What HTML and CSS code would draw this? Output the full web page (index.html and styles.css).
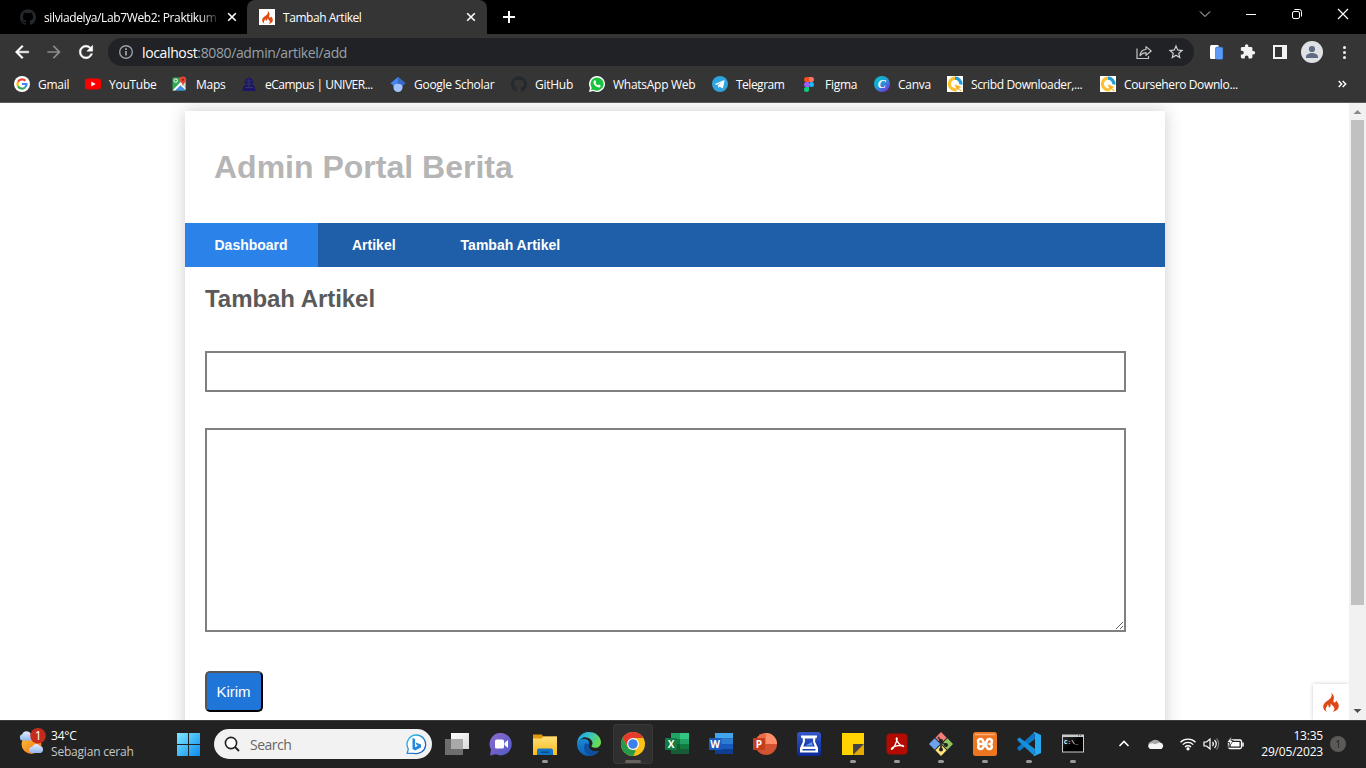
FILE: index.html
```html
<!DOCTYPE html>
<html lang="id">
<head>
<meta charset="utf-8">
<title>Tambah Artikel</title>
<link rel="stylesheet" href="styles.css">
</head>
<body>
<svg class="defs" width="0" height="0">
  <defs>
    <linearGradient id="gWin" x1="0" y1="0" x2="1" y2="1"><stop offset="0" stop-color="#7fe8ff"/><stop offset="1" stop-color="#0a8af0"/></linearGradient>
    <linearGradient id="gCanva" x1="0" y1="0" x2=".8" y2="1"><stop offset="0" stop-color="#00c9cc"/><stop offset=".5" stop-color="#1f9fd2"/><stop offset="1" stop-color="#7d2ae8"/></linearGradient>
    <linearGradient id="gChat" x1="0" y1="0" x2="1" y2="1"><stop offset="0" stop-color="#8d6bd0"/><stop offset="1" stop-color="#5158c4"/></linearGradient>
    <linearGradient id="gFolder" x1="0" y1="0" x2="0" y2="1"><stop offset="0" stop-color="#ffe078"/><stop offset="1" stop-color="#fdb91a"/></linearGradient>
    <linearGradient id="gEdgeTop" x1="0" y1="0" x2="1" y2=".4"><stop offset="0" stop-color="#1c9fe0"/><stop offset=".5" stop-color="#35c1c8"/><stop offset="1" stop-color="#66dc55"/></linearGradient>
    <linearGradient id="gEdge" x1="0" y1="0" x2="0" y2="1"><stop offset="0" stop-color="#2099dc"/><stop offset="1" stop-color="#0c62b8"/></linearGradient>
    <linearGradient id="gBing" x1="0" y1="0" x2="1" y2="1"><stop offset="0" stop-color="#2cc6e8"/><stop offset="1" stop-color="#1c4fc0"/></linearGradient>
    <linearGradient id="gSun" x1="0" y1="0" x2="1" y2="1"><stop offset="0" stop-color="#ffc63a"/><stop offset="1" stop-color="#ee6b15"/></linearGradient>
    <linearGradient id="gCloud" x1="0" y1="0" x2="0" y2="1"><stop offset="0" stop-color="#e5efff"/><stop offset="1" stop-color="#91b5ee"/></linearGradient>
    <linearGradient id="gScan" x1="0" y1="0" x2="0" y2="1"><stop offset="0" stop-color="#3557c8"/><stop offset="1" stop-color="#0b2a97"/></linearGradient>
    <linearGradient id="gTask" x1="0" y1="0" x2="1" y2="1"><stop offset="0" stop-color="#fff"/><stop offset="1" stop-color="#d8d8d8"/></linearGradient>
    <linearGradient id="gCmd" x1="0" y1="0" x2="1" y2="1"><stop offset="0" stop-color="#303030"/><stop offset=".5" stop-color="#000"/></linearGradient>
    <symbol id="github" viewBox="0 0 24 24"><path d="M12 .297c-6.63 0-12 5.373-12 12 0 5.303 3.438 9.8 8.205 11.385.6.113.82-.258.82-.577 0-.285-.01-1.04-.015-2.04-3.338.724-4.042-1.61-4.042-1.61C4.422 18.07 3.633 17.7 3.633 17.7c-1.087-.744.084-.729.084-.729 1.205.084 1.838 1.236 1.838 1.236 1.07 1.835 2.809 1.305 3.495.998.108-.776.417-1.305.76-1.605-2.665-.3-5.466-1.332-5.466-5.93 0-1.31.465-2.38 1.235-3.22-.135-.303-.54-1.523.105-3.176 0 0 1.005-.322 3.3 1.23.96-.267 1.98-.399 3-.405 1.02.006 2.04.138 3 .405 2.28-1.552 3.285-1.23 3.285-1.23.645 1.653.24 2.873.12 3.176.765.84 1.23 1.91 1.23 3.22 0 4.61-2.805 5.625-5.475 5.92.42.36.81 1.096.81 2.22 0 1.606-.015 2.896-.015 3.286 0 .315.21.69.825.57C20.565 22.092 24 17.592 24 12.297c0-6.627-5.373-12-12-12"/></symbol>
    <symbol id="flame" viewBox="0 0 16 19"><path fill="#dd4814" d="M8.200 0c.9 1.900.5 3.500-.6 4.900C5.500 7.600.2 9.400.2 13.700c0 2.500 1.600 4.300 3.900 5.100-1.300-1.100-1.700-2.300-1.200-3.700.5-1.200 1.600-1.900 1.700-3.500 1 .7 1.300 1.700 1 2.700.9.200 1.700-.3 2-1.200.2-1-.2-1.900.1-2.800.4 2 3.700 2.700 3.700 5.300 0 1.300-.6 2.400-1.700 3.200 3.400-.8 6.100-2.700 6.100-5.800 0-2.400-1.600-3.900-2.800-5.400.1 1-.3 1.800-1.300 1.900-1.200 0-1.500-1-1.200-2C11.200 4.900 11.200 1.600 8.200 0z"/></symbol>
    <symbol id="close" viewBox="0 0 10 10"><path d="M1.200 1.200l7.600 7.600M8.800 1.200L1.200 8.800" fill="none" stroke="#fff" stroke-width="1.600"/></symbol>
    <symbol id="ring" viewBox="0 0 16 16"><path fill="#fff" d="M0 0h16v16H0z"/><path d="M8 2.200A5.800 5.800 0 1 0 10 13.500" fill="none" stroke="#fbc02d" stroke-width="3.200"/><path d="M8 2.200A5.800 5.800 0 0 1 13.900 8.500" fill="none" stroke="#1f9bd8" stroke-width="3.200"/><path fill="#fbb01d" stroke="#fff" stroke-width=".5" d="M7.500 8l7.800 3-3 1.200 2.800 2.600-1.300 1-2.500-2.600-1.400 2.500z"/></symbol>
  </defs>
</svg>

<header class="browser">
  <div class="tabstrip">
    <div class="tab tab-idle">
      <svg class="i16" fill="#24292e"><use href="#github"/></svg>
      <span class="tab-title tab-fade">silviadelya/Lab7Web2: Praktikum</span>
      <svg class="i10"><use href="#close"/></svg>
    </div>
    <div class="tab tab-active">
      <span class="favicon"><svg width="11" height="13"><use href="#flame"/></svg></span>
      <span class="tab-title">Tambah Artikel</span>
      <svg class="i10"><use href="#close"/></svg>
    </div>
    <svg class="new-tab" width="12" height="12" viewBox="0 0 12 12"><path d="M6 0v12M0 6h12" stroke="#fff" stroke-width="2"/></svg>
    <div class="window-controls">
      <svg viewBox="0 0 46 28"><path d="M18 11.500l5 5 5-5" fill="none" stroke="#ddd"/></svg>
      <svg viewBox="0 0 46 28"><path d="M18 14.500h10" stroke="#fff"/></svg>
      <svg viewBox="0 0 46 28"><rect x="18.500" y="11.500" width="7" height="7" rx="1.500" fill="none" stroke="#fff"/><path d="M20.500 9.500h5a2 2 0 0 1 2 2v5" fill="none" stroke="#fff"/></svg>
      <svg viewBox="0 0 46 28"><path d="M18 9l10 10M28 9L18 19" stroke="#fff" stroke-width="1.200"/></svg>
    </div>
  </div>

  <div class="toolbar">
    <div class="nav-buttons">
      <svg viewBox="0 0 24 24" fill="#fff"><path stroke="#fff" stroke-width=".6" d="M20 11H7.830l5.590-5.590L12 4l-8 8 8 8 1.410-1.410L7.830 13H20v-2z"/></svg>
      <svg viewBox="0 0 24 24" fill="#8b8b8b"><path d="M4 11h12.170l-5.590-5.590L12 4l8 8-8 8-1.410-1.410L16.170 13H4v-2z"/></svg>
      <svg viewBox="0 0 24 24" fill="#fff"><path stroke="#fff" stroke-width=".6" d="M17.650 6.350C16.200 4.900 14.210 4 12 4c-4.420 0-7.990 3.580-7.990 8s3.570 8 7.990 8c3.730 0 6.840-2.550 7.730-6h-2.080c-.82 2.330-3.040 4-5.650 4-3.310 0-6-2.690-6-6s2.690-6 6-6c1.660 0 3.140.69 4.220 1.780L13 11h7V4l-2.350 2.350z"/></svg>
    </div>
    <div class="omnibox">
      <svg class="i16" viewBox="0 0 16 16"><circle cx="8" cy="8" r="6.300" fill="none" stroke="#9aa0a6" stroke-width="1.400"/><path d="M8 7v4.500M8 4.300V6" stroke="#b4b6b9" stroke-width="1.500"/></svg>
      <span class="url"><b>localhost</b>:8080/admin/artikel/add</span>
      <svg class="i16" viewBox="0 0 16 16" fill="none" stroke="#c4c7c5" stroke-width="1.200"><path d="M1 4.500v10h11.500v-2.500"/><path d="M4 11.500c.3-3.500 2.500-5.800 6-6V2.600L15.200 7l-5.200 4.300V8.700c-2.500 0-4.300.8-6 2.800z" stroke-linejoin="round"/></svg>
      <svg class="i18" viewBox="0 0 24 24" fill="#cfd1d3"><path d="M22 9.240l-7.190-.62L12 2 9.190 8.630 2 9.240l5.460 4.730L5.820 21 12 17.270 18.180 21l-1.630-7.030L22 9.240zM12 15.400l-3.760 2.270 1-4.280-3.320-2.880 4.380-.38L12 6.100l1.710 4.040 4.380.38-3.320 2.880 1 4.280L12 15.400z"/></svg>
    </div>
    <div class="actions">
      <svg viewBox="0 0 32 28"><rect x="6" y="7" width="9" height="14" rx="1.500" fill="#fff"/><rect x="11.500" y="9" width="7.500" height="12.500" rx="1.500" fill="#5a9bf8" stroke="#2a4d80" stroke-width=".5"/></svg>
      <svg viewBox="0 0 32 28"><path fill="#f1f3f4" transform="translate(3.500 5.500) scale(.68)" d="M20.500 11H19V7c0-1.100-.9-2-2-2h-4V3.500C13 2.120 11.880 1 10.500 1S8 2.120 8 3.500V5H4c-1.100 0-1.990.9-1.990 2v3.800H3.500c1.490 0 2.700 1.210 2.700 2.700s-1.210 2.700-2.700 2.700H2V20c0 1.100.9 2 2 2h3.800v-1.500c0-1.490 1.210-2.700 2.700-2.700 1.490 0 2.700 1.210 2.700 2.700V22H17c1.100 0 2-.9 2-2v-4h1.500c1.380 0 2.500-1.120 2.500-2.500S21.880 11 20.500 11z"/></svg>
      <svg viewBox="0 0 32 28"><path fill="#f1f3f4" fill-rule="evenodd" d="M5 7h14v14H5zM7 9v10h7V9z"/></svg>
      <svg viewBox="0 0 32 28"><circle cx="12" cy="14" r="11" fill="#dfe1e5"/><circle cx="12" cy="11" r="3.100" fill="#5f6b80"/><path fill="#5f6b80" d="M6 20v-1.500c0-2.300 3.500-3.500 6-3.500s6 1.200 6 3.500V20z"/></svg>
      <svg viewBox="0 0 32 28" fill="#f1f3f4"><circle cx="12.500" cy="9.500" r="1.500"/><circle cx="12.500" cy="14.500" r="1.500"/><circle cx="12.500" cy="19.500" r="1.500"/></svg>
    </div>
  </div>

  <nav class="bookmarks">
    <a class="bm"><svg class="i16" viewBox="0 0 16 16"><circle cx="8" cy="8" r="8" fill="#fff"/><g fill="none" stroke-width="2.200"><path stroke="#ea4335" d="M4 5.800A4.600 4.600 0 0 1 11.400 4.800"/><path stroke="#fbbc05" d="M4 5.800A4.600 4.600 0 0 0 4 10.200"/><path stroke="#34a853" d="M4 10.200A4.600 4.600 0 0 0 11 11.500"/><path stroke="#4285f4" d="M11 11.500A4.600 4.600 0 0 0 12.500 8H8"/></g></svg><span>Gmail</span></a>
    <a class="bm"><svg class="i16" viewBox="0 0 16 16"><rect y="2.500" width="16" height="11" rx="3" fill="#f00"/><path fill="#fff" d="M6.300 5.600v4.800L10.600 8z"/></svg><span>YouTube</span></a>
    <a class="bm"><svg class="i16" viewBox="0 0 16 16"><rect x=".5" y="1.500" width="13" height="13" rx="1" fill="#34a853"/><path fill="#4a8af4" d="M7.500 9l6 5.500H2.500z"/><path fill="#fff" d="M12.500 2L.5 14.500h2.600L13.500 4.200zM7.500 8.500l6 5.500v-2L9 7.500z"/><path fill="#dadce0" d="M10 8.500L13.500 5v7z"/><circle cx="3.700" cy="4.600" r="1.700" fill="none" stroke="#fff"/><path fill="#ea4335" d="M11 .5A3.200 3.200 0 0 0 7.800 3.700C7.800 6 10.500 7 11 10 11.500 7 14.200 6 14.200 3.700A3.200 3.200 0 0 0 11 .5z"/><circle cx="11" cy="3.700" r="1.200" fill="#a52714"/></svg><span>Maps</span></a>
    <a class="bm tight"><svg class="i16" viewBox="0 0 16 16"><path fill="#1b1768" d="M8 1.500l3 1.500 1.500 3-.8 3L14 11v2.500h.5V15h-13v-1.500H2V11l2.300-2-.8-3L5 3z"/><path d="M5.500 5h5M5 8h6M4 11.500h8M8 3v9" stroke="#3a3866" stroke-width=".9"/></svg><span>eCampus | UNIVER...</span></a>
    <a class="bm"><svg class="i16" viewBox="0 0 16 16"><path fill="#a0c3ff" d="M3.500 7.500h9v4A4.500 4.500 0 0 1 8 16a4.500 4.500 0 0 1-4.500-4.500z"/><path fill="#4285f4" d="M8 1L.5 7.200 3.700 9.800a4.800 4.800 0 0 1 8.600 0L15.500 7.200z"/><path fill="#356ac3" d="M8 1v6.200c2 0 3.700 1.100 4.300 2.600l3.200-2.600z"/></svg><span>Google Scholar</span></a>
    <a class="bm"><svg class="i16" fill="#24292e"><use href="#github"/></svg><span>GitHub</span></a>
    <a class="bm"><svg class="i16" viewBox="0 0 16 16"><path fill="#fff" d="M8 0a8 8 0 1 1-3.700 15.100L0 16l1-4.100A8 8 0 0 1 8 0z"/><path fill="#18c13e" d="M8 1.400a6.600 6.600 0 1 1-3.300 12.300L2 14.300l.7-2.600A6.600 6.600 0 0 1 8 1.400z"/><path fill="#fff" d="M5.600 4.200c.3-.1.700-.1.900.3l.6 1.400c.1.300-.4.800-.6 1.100.6 1.200 1.500 2 2.600 2.500.3-.3.600-.9.900-.9l1.500.8c.4.200-.1 1.500-.6 1.800-1.300.8-3.500-.2-4.900-1.600C4.500 8 3.800 5.200 5.600 4.200z"/></svg><span>WhatsApp Web</span></a>
    <a class="bm tight"><svg class="i16" viewBox="0 0 16 16"><circle cx="8" cy="8" r="8" fill="#2ca5e0"/><path fill="#fff" d="M2.800 7.900l9-3.600c.5-.2.800.1.700.6l-1.500 7c-.1.500-.4.600-.9.300L7.500 10.400l-.9 1.700-.7-2.500 4-3.600-4.900 3.100z"/></svg><span>Telegram</span></a>
    <a class="bm"><svg class="i16" viewBox="0 0 16 16"><path fill="#f24e1e" d="M5.500 1H8v5H5.500a2.500 2.500 0 0 1 0-5z"/><path fill="#ff7262" d="M8 1h2.500a2.500 2.500 0 0 1 0 5H8z"/><path fill="#a259ff" d="M5.500 6H8v5H5.500a2.500 2.500 0 0 1 0-5z"/><circle cx="10.500" cy="8.500" r="2.500" fill="#1abcfe"/><path fill="#0acf83" d="M5.500 11H8v2.500A2.500 2.500 0 1 1 5.500 11z"/></svg><span>Figma</span></a>
    <a class="bm"><svg class="i16" viewBox="0 0 16 16"><circle cx="8" cy="8" r="8" fill="url(#gCanva)"/><text x="7.800" y="12.300" text-anchor="middle" class="canva-letter">C</text></svg><span>Canva</span></a>
    <a class="bm snug"><svg class="i16"><use href="#ring"/></svg><span>Scribd Downloader,...</span></a>
    <a class="bm snug"><svg class="i16"><use href="#ring"/></svg><span>Coursehero Downlo...</span></a>
    <svg class="overflow" width="9" height="8" viewBox="0 0 9 8"><path d="M.7 1l3 3-3 3M4.700 1l3 3-3 3" fill="none" stroke="#fff" stroke-width="1.400"/></svg>
  </nav>
</header>

<div class="viewport">
  <main class="page">
    <div class="container">
      <header class="site-header"><h1>Admin Portal Berita</h1></header>
      <nav class="site-nav">
        <a class="active">Dashboard</a>
        <a>Artikel</a>
        <a>Tambah Artikel</a>
      </nav>
      <section class="content">
        <h2>Tambah Artikel</h2>
        <form>
          <input type="text" class="field">
          <textarea class="field area"></textarea>
          <button type="button" class="submit">Kirim</button>
        </form>
      </section>
    </div>
    <div class="debug-icon"><svg width="16" height="19"><use href="#flame"/></svg></div>
  </main>
  <div class="scrollbar">
    <svg width="17" height="17"><path d="M4.500 11h8l-4-4z" fill="#8a8a8a"/></svg>
    <div class="thumb"></div>
    <svg width="17" height="17"><path d="M4.500 6h8l-4 4z" fill="#505050"/></svg>
  </div>
</div>

<footer class="taskbar">
  <div class="weather">
    <svg width="28" height="30" viewBox="0 0 28 30"><circle cx="12.500" cy="16" r="10" fill="url(#gSun)"/><path fill="url(#gCloud)" d="M3.200 12.500a3.200 3.200 0 0 1 0-6.200A4.800 4.800 0 0 1 12 6 3.400 3.400 0 0 1 12.500 12.500z"/><path fill="url(#gCloud)" d="M13 25a3 3 0 0 1 0-6 4.500 4.500 0 0 1 8-1 3.600 3.600 0 0 1 .5 7z"/><circle cx="19" cy="7.800" r="7.800" fill="#c42b1c"/><text x="19" y="12" text-anchor="middle" class="badge-number">1</text></svg>
    <div class="weather-text"><span>34°C</span><span class="muted">Sebagian cerah</span></div>
  </div>
  <svg class="start" width="23" height="23" viewBox="0 0 23 23" fill="url(#gWin)"><path d="M0 0h11v11H0zM12 0h11v11H12zM0 12h11v11H0zM12 12h11v11H12z"/></svg>
  <div class="search">
    <svg class="i16" viewBox="0 0 16 16"><circle cx="7" cy="7" r="5.600" fill="#fff" stroke="#222" stroke-width="1.600"/><path d="M11 11l4 4" stroke="#222" stroke-width="1.800"/></svg>
    <span>Search</span>
    <svg width="21" height="21" viewBox="0 0 21 21"><path fill="#fff" stroke="url(#gBing)" stroke-width="1.300" d="M10.500 1A9.300 9.300 0 1 1 8 19.300H1.200L2.300 15A9.300 9.300 0 0 1 10.500 1z"/><path fill="#2387dd" d="M6.500 4l2.600 1v8.200l2.800-1.500-1.300-.8-.9-2.500 5.300 2v3L9 16.500l-2.500-1.600z"/></svg>
  </div>
  <div class="apps">
    <div class="app"><svg viewBox="0 0 24 24"><rect x="6" y="1" width="18" height="16" fill="url(#gTask)"/><path fill="#7b7b7b" fill-opacity=".85" d="M0 7h18v16H0z"/><path fill="#a9a9a9" d="M6 7h12v10H6z"/></svg></div>
    <div class="app"><svg viewBox="0 0 24 24"><path fill="url(#gChat)" d="M12 1a11 11.200 0 1 1-5 21.300L1 23.400l1-6A11 11 0 0 1 12 1z"/><rect x="6" y="7.500" width="9" height="9" rx="1.500" fill="#fff"/><path fill="#fff" d="M15.500 11L19 8v8l-3.500-3z"/></svg></div>
    <div class="app running"><svg viewBox="0 0 24 24"><path fill="#e29a0c" d="M0 2.500h8.500l2 2H24V8H0z"/><path fill="url(#gFolder)" d="M0 6.500h8.500l2-2H24V23H0z"/><path fill="#1474c4" d="M4 23v-4.500a2 2 0 0 1 2-2h12a2 2 0 0 1 2 2V23z"/><path fill="#0a4a8e" d="M8 19.500h8V21H8z"/></svg></div>
    <div class="app"><svg viewBox="0 0 24 24"><path fill="url(#gEdge)" d="M12 0A12 12 0 0 0 0 12a12 12 0 0 0 12 12c4.500 0 8-2.100 10-5.200-3 1.400-8 1-9.700-2.300-1.300-2.500 0-4.200-.2-6C11.700 7 7 5.800 3 8.500z"/><path fill="#1050a0" d="M8 11.500c-2.600 5.500.5 11.600 5.500 12.400 3.500-.3 6.700-2.100 8.500-5.100-5 2.200-11.500-.8-9.700-7.100z"/><path fill="url(#gEdgeTop)" d="M.2 10.500C1.500 4 6.600 0 12 0c7 0 12 5 12 10.300 0 3.500-2.500 5.500-5.500 5.500-2.400 0-4.200-.8-4-1.700.1-.8 1-1.100 1-3C15.500 8 12 5.200 8 5.200 4 5.200 1.500 7.500.2 10.500z"/></svg></div>
    <div class="app current"><svg viewBox="0 0 24 24"><circle cx="12" cy="12" r="12" fill="#fbc116"/><path fill="#e33b2e" d="M1.600 6A12 12 0 0 1 22.400 6H12L6.800 15z"/><path fill="#269a46" d="M1.600 6l5.200 9 5.200 3 3 .5L12 24A12 12 0 0 1 1.600 6z"/><circle cx="12" cy="12" r="6" fill="#fff"/><circle cx="12" cy="12" r="4.800" fill="#3b80ec"/></svg></div>
    <div class="app"><svg viewBox="0 0 24 24"><path fill="#21a366" d="M6 1h18v6H6z"/><path fill="#33c481" d="M15 1h9v6h-9z"/><path fill="#107c41" d="M6 7h18v5H6z"/><path fill="#185c37" d="M6 12h18v10H6z"/><path fill="#21a366" d="M15 7h9v5h-9z"/><path fill="#107c41" d="M15 12h9v5h-9z"/><rect y="6" width="12" height="12" rx="1" fill="#107c41"/><text x="6" y="15.700" text-anchor="middle" class="office">X</text></svg></div>
    <div class="app"><svg viewBox="0 0 24 24"><path fill="#41a5ee" d="M6 1h18v5.500H6z"/><path fill="#2b7cd3" d="M6 6.500h18V12H6z"/><path fill="#185abd" d="M6 12h18v5H6z"/><path fill="#103f91" d="M6 17h18v5H6z"/><rect y="6" width="12.500" height="12" rx="1" fill="#185abd"/><text x="6" y="15.500" text-anchor="middle" class="office">W</text></svg></div>
    <div class="app"><svg viewBox="0 0 24 24"><circle cx="13" cy="12" r="11" fill="#d35230"/><path fill="#ed6c47" d="M13 1A11 11 0 0 0 2 12h11z"/><path fill="#ff8f6b" d="M13 1a11 11 0 0 1 11 11H13z"/><rect y="6" width="12" height="12" rx="1" fill="#c43e1c"/><text x="6" y="15.700" text-anchor="middle" class="office">P</text></svg></div>
    <div class="app"><svg viewBox="0 0 24 24"><rect width="24" height="24" rx="3" fill="url(#gScan)"/><path fill="#fff" fill-rule="evenodd" d="M4 3.500h16v2.300h-1.500L18 9.500 21 16v4.500H3V16l3-6.500-.5-3.700H4zM7.800 6.500L8 9.500 6.300 14.500h11.400L16 9.500l.2-3z"/><path fill="#1a3da8" d="M5.500 17h13v1.500h-13z"/><path fill="#5fa0ee" d="M8.500 13.500l6.500-3.500.8 3.500z"/></svg></div>
    <div class="app running"><svg viewBox="0 0 24 24"><path fill="#ffd400" d="M1 1h22v22H1z"/><path fill="#e5a900" d="M12 23L23 12v11z"/><path fill="#444" d="M12 12h11L12 23z"/></svg></div>
    <div class="app running"><svg viewBox="0 0 24 24"><rect x="1.500" y="1.500" width="21" height="21" rx="4" fill="#b30b00"/><path d="M11.800 6c-1.600 0 .6 5.600 5.500 8.200 2.200 1.100 1.500-1-.8-.9-3.500 0-8.200 1.300-9.800 3-1 1.300.6 1.500 2-.8 1.700-2.800 4.400-9.500 3.100-9.500z" fill="none" stroke="#fff" stroke-width="1.300"/></svg></div>
    <div class="app running"><svg viewBox="0 0 24 24"><g transform="translate(12 12) rotate(45)"><path fill="#f27d79" d="M-8.500-8.500h8v8h-8z"/><path fill="#8dc65e" d="M.5-8.500h8v8h-8z"/><path fill="#6ba3ee" d="M-8.500.5h8v8h-8z"/><path fill="#ffe27a" d="M.5.500h8v8h-8z"/></g><path d="M9 5l3 4v8M12 10l5 3" fill="none" stroke="#333" stroke-width="1.700"/><g fill="#222"><circle cx="12" cy="9" r="2"/><circle cx="12" cy="17.500" r="2"/><circle cx="17" cy="13" r="2"/></g></svg></div>
    <div class="app running"><svg viewBox="0 0 24 24"><rect width="24" height="24" rx="2.500" fill="#ed7620"/><path d="M2 2.500h20" stroke="#ffad76" stroke-width="1.500"/><path d="M9.500 12h5M9.500 12H7.500a2.500 2.500 0 1 1 2.500-3l4 6.500a2.500 2.500 0 1 0 2.500-3.500 2.500 2.500 0 1 0-2.500-3l-4 6.500a2.500 2.500 0 1 1-2.500-3.500" fill="none" stroke="#fff" stroke-width="2.500" stroke-linejoin="round"/></svg></div>
    <div class="app running"><svg viewBox="0 0 24 24"><path fill="#0b77c5" d="M17.500 0L.5 15.500v1.700L2.500 19 18 7z"/><path fill="#168fdc" d="M17.500 24L.5 8.500V6.800L2.500 5.500 18 17z"/><path fill="#27a9f2" d="M17.500 0L24 3v18l-6.500 3-1-.5L18 21V3L16.500.5z"/></svg></div>
    <div class="app running"><svg viewBox="0 0 24 24"><path fill="#c9cdd2" d="M1 2.500h22v18H1z"/><path fill="url(#gCmd)" d="M2 5h20v14.500H2z"/><path d="M17 3.700h4" stroke="#555" stroke-dasharray="1 1"/><text x="3" y="11.500" class="prompt">C:\_</text></svg></div>
  </div>
  <div class="tray">
    <svg class="t-up" viewBox="0 0 32 24"><path d="M11.500 14l4.500-4.500L20.500 14" fill="none" stroke="#fff" stroke-width="1.600"/></svg>
    <svg class="t-cloud" viewBox="0 0 32 24"><path fill="#a7a7a7" d="M10 16a3.500 3.500 0 0 1 1-6.500 6 6 0 0 1 9 .5l2 6z"/><path fill="#f5f5f5" d="M10.500 17a2.700 2.700 0 0 1-.8-5 4 4 0 0 1 5 .3l5.300-1.800a3.500 3.500 0 0 1 1.500 6.500z"/></svg>
    <svg class="t-small" viewBox="0 0 24 24" fill="none" stroke="#fff" stroke-width="1.300"><path d="M4.500 10.200a10.600 10.600 0 0 1 15 0M6.800 12.600a7.400 7.400 0 0 1 10.400 0M9 15a4.200 4.200 0 0 1 6 0"/><circle cx="12" cy="16.800" r="1" fill="#fff"/></svg>
    <svg class="t-small" viewBox="0 0 24 24" fill="none" stroke="#fff" stroke-width="1.200"><path d="M4 10v4h2.500l3.500 3V7l-3.500 3zM12.500 10a3 3 0 0 1 0 4M14.500 8a5.500 5.500 0 0 1 0 8"/><path stroke="#777" d="M16.500 6.500a8 8 0 0 1 0 11"/></svg>
    <svg class="t-battery" viewBox="0 0 24 24"><rect x="4.500" y="8" width="13" height="8.500" rx="1.500" fill="none" stroke="#fff" stroke-width="1.300"/><rect x="6.500" y="10" width="9" height="4.500" fill="#fff"/><path d="M19 10.500v4" stroke="#fff" stroke-width="1.500"/><path fill="#fff" stroke="#222" stroke-width=".8" d="M7.500 4L3 10.500h2.600L4.500 15.500 9.300 8.500H6.900z"/></svg>
    <div class="clock"><span>13:35</span><span>29/05/2023</span></div>
    <span class="notice">1</span>
  </div>
</footer>
</body>
</html>
```
FILE: styles.css
```css
* { box-sizing: border-box; }
html, body { height: 100%; margin: 0; overflow: hidden; }
body {
  display: flex;
  flex-direction: column;
  font-family: "Open Sans", "Noto Sans", sans-serif;
  font-size: 12px;
  letter-spacing: -0.27px;
  color: #fff;
  background: #fff;
}
svg { display: block; flex: none; }
.defs { position: absolute; }
.i16 { width: 16px; height: 16px; }
.i18 { width: 18px; height: 18px; }
.i10 { width: 10px; height: 10px; }

/* Browser chrome */
.browser {
  flex: none;
  height: 103px;
  background: #353535;
  border-bottom: 1px solid #5c5c5c;
}
.tabstrip { display: flex; height: 34px; background: #000; }
.tab { display: flex; align-items: center; height: 34px; }
.tab-idle { width: 247px; padding: 0 10px 0 20px; border-bottom-right-radius: 8px; }
.tab-active {
  width: 240px;
  padding: 0 11px 0 12px;
  background: #353535;
  border-radius: 8px 8px 0 0;
  letter-spacing: -0.45px;
}
.tab-title { flex: 1; margin-left: 8px; white-space: nowrap; }
.tab-fade {
  margin-right: 7px;
  letter-spacing: -0.38px;
  mask-image: linear-gradient(to right, #000 88%, transparent);
}
.favicon {
  display: flex;
  align-items: center;
  justify-content: center;
  width: 16px;
  height: 16px;
  background: #fff;
}
.new-tab { margin: 11px 0 0 16px; }
.window-controls { display: flex; margin-left: auto; }
.window-controls svg { width: 46px; height: 28px; }

.toolbar { display: flex; align-items: center; height: 36px; }
.nav-buttons { display: flex; gap: 12px; width: 108px; padding-left: 12px; }
.nav-buttons svg { width: 20px; height: 20px; }
.omnibox {
  display: flex;
  align-items: center;
  width: 1086px;
  height: 28px;
  padding: 0 9px 0 10px;
  border-radius: 14px;
  background: #202225;
}
.omnibox .i16:nth-of-type(2) { margin-right: 15px; }
.url { flex: 1; margin-left: 8px; font-size: 14px; letter-spacing: -0.37px; color: #9aa0a6; }
.url b { font-weight: 400; color: #fff; }
.actions { display: flex; padding-left: 10px; }
.actions svg { width: 32px; height: 28px; }

.bookmarks {
  display: grid;
  grid-template-columns: 71px 87px 69px 149px 121px 78px 123px 89px 73px 73px 153px 1fr 28px;
  align-items: center;
  height: 28px;
  padding-left: 14px;
}
.bm { display: flex; align-items: center; gap: 8px; white-space: nowrap; }
.bm.tight { letter-spacing: -0.5px; }
.bm.snug { letter-spacing: -0.37px; }

/* Web page */
.viewport { display: flex; height: 617px; flex: none; }
.page {
  position: relative;
  flex: 1;
  height: 617px;
  padding: 8px 184px 0 185px;
  overflow: hidden;
  font-family: "Liberation Sans", Arial, sans-serif;
  letter-spacing: 0;
  color: #5a5a5a;
}
.container { width: 980px; height: 800px; background: #fff; box-shadow: 0 0 16px #ccc; }
.site-header { height: 112px; padding: 37px 29px 0; }
.site-header h1 { margin: 0; font-size: 32px; line-height: 38px; color: #b5b5b5; }
.site-nav { display: flex; height: 44px; background: #1f5faa; color: #fff; }
.site-nav a {
  display: flex;
  align-items: center;
  padding: 0 31px 0 34px;
  font-size: 14px;
  font-weight: 700;
}
.site-nav a.active { width: 133px; padding: 0 29.500px; background: #2b83ea; }
.content { padding: 18px 20px; }
.content h2 { margin: 0 0 38px; font-size: 24px; line-height: 28px; letter-spacing: -0.05px; }
.field {
  display: block;
  width: 921px;
  height: 41px;
  margin: 0;
  border: 2px solid #808080;
  background: #fff;
}
.area { height: 204px; margin-top: 36px; resize: both; }
.submit {
  width: 58px;
  height: 41px;
  margin-top: 39px;
  padding: 0 1px 0 0;
  border: 2px solid;
  border-color: #555 #000 #000 #555;
  border-radius: 5px;
  background: #1f75d8;
  color: #fff;
  font: 15px "Liberation Sans", Arial, sans-serif;
}
.debug-icon {
  position: absolute;
  right: 0;
  bottom: 0;
  display: flex;
  justify-content: center;
  width: 36px;
  height: 36px;
  padding-top: 9px;
  background: #fff;
  box-shadow: 0 0 4px #ccc;
}
.scrollbar { display: flex; flex-direction: column; width: 17px; background: #f1f1f1; }
.scrollbar svg:last-child { margin-top: auto; }
.thumb { width: 13px; height: 485px; margin-left: 2px; background: #c1c1c1; }

/* Taskbar */
.taskbar {
  display: flex;
  align-items: center;
  height: 48px;
  flex: none;
  padding-bottom: 1px;
  background: #222;
  border-top: 1px solid #3b3b3b;
}
.weather { display: flex; width: 177px; padding-left: 19px; }
.weather-text { display: flex; flex-direction: column; margin-left: 4px; line-height: 16px; letter-spacing: -0.2px; }
.muted { color: #c8c8c8; }
.start { margin-right: 14px; }
.search {
  display: flex;
  align-items: center;
  width: 218px;
  height: 30px;
  padding: 0 5px 0 10px;
  border-radius: 15px;
  background: #f2f2f2;
  color: #666;
  font-size: 14px;
  letter-spacing: -0.5px;
}
.search span { flex: 1; margin-left: 10px; }
.apps { display: flex; margin-left: 3px; }
.app {
  display: grid;
  grid-template-rows: 32px 3px;
  justify-items: center;
  align-items: center;
  width: 40px;
  height: 40px;
  margin: 0 2px;
  padding-top: 4px;
}
.app svg { width: 24px; height: 24px; }
.app.running::after, .app.current::after {
  content: "";
  width: 6px;
  height: 3px;
  border-radius: 2px;
  background: #9a9a9a;
}
.app.current { background: #2f2f2f; border-radius: 4px; box-shadow: inset 0 0 0 1px #383838; }
.app.current::after { width: 16px; background: #67625f; }
.tray { display: flex; align-items: center; margin-left: 13px; }
.t-up, .t-cloud { width: 32px; height: 24px; }
.t-cloud { margin-right: 4px; }
.t-small, .t-battery { width: 24px; height: 24px; }
.clock {
  display: flex;
  flex-direction: column;
  align-items: flex-end;
  width: 75px;
  line-height: 16px;
  letter-spacing: -0.2px;
}
.notice {
  width: 16px;
  height: 16px;
  margin-left: 7px;
  border-radius: 8px;
  background: #5d5956;
  color: #222;
  font-size: 10px;
  line-height: 16px;
  text-align: center;
}
.badge-number { font-size: 12px; fill: #fff; }
.office { font: 700 10px "Open Sans", sans-serif; fill: #fff; letter-spacing: 0; }
.canva-letter { font: italic 700 12px "Liberation Serif", serif; fill: #fff; letter-spacing: 0; }
.prompt { font: 700 6px "Liberation Mono", monospace; fill: #fff; letter-spacing: 0; }
```
